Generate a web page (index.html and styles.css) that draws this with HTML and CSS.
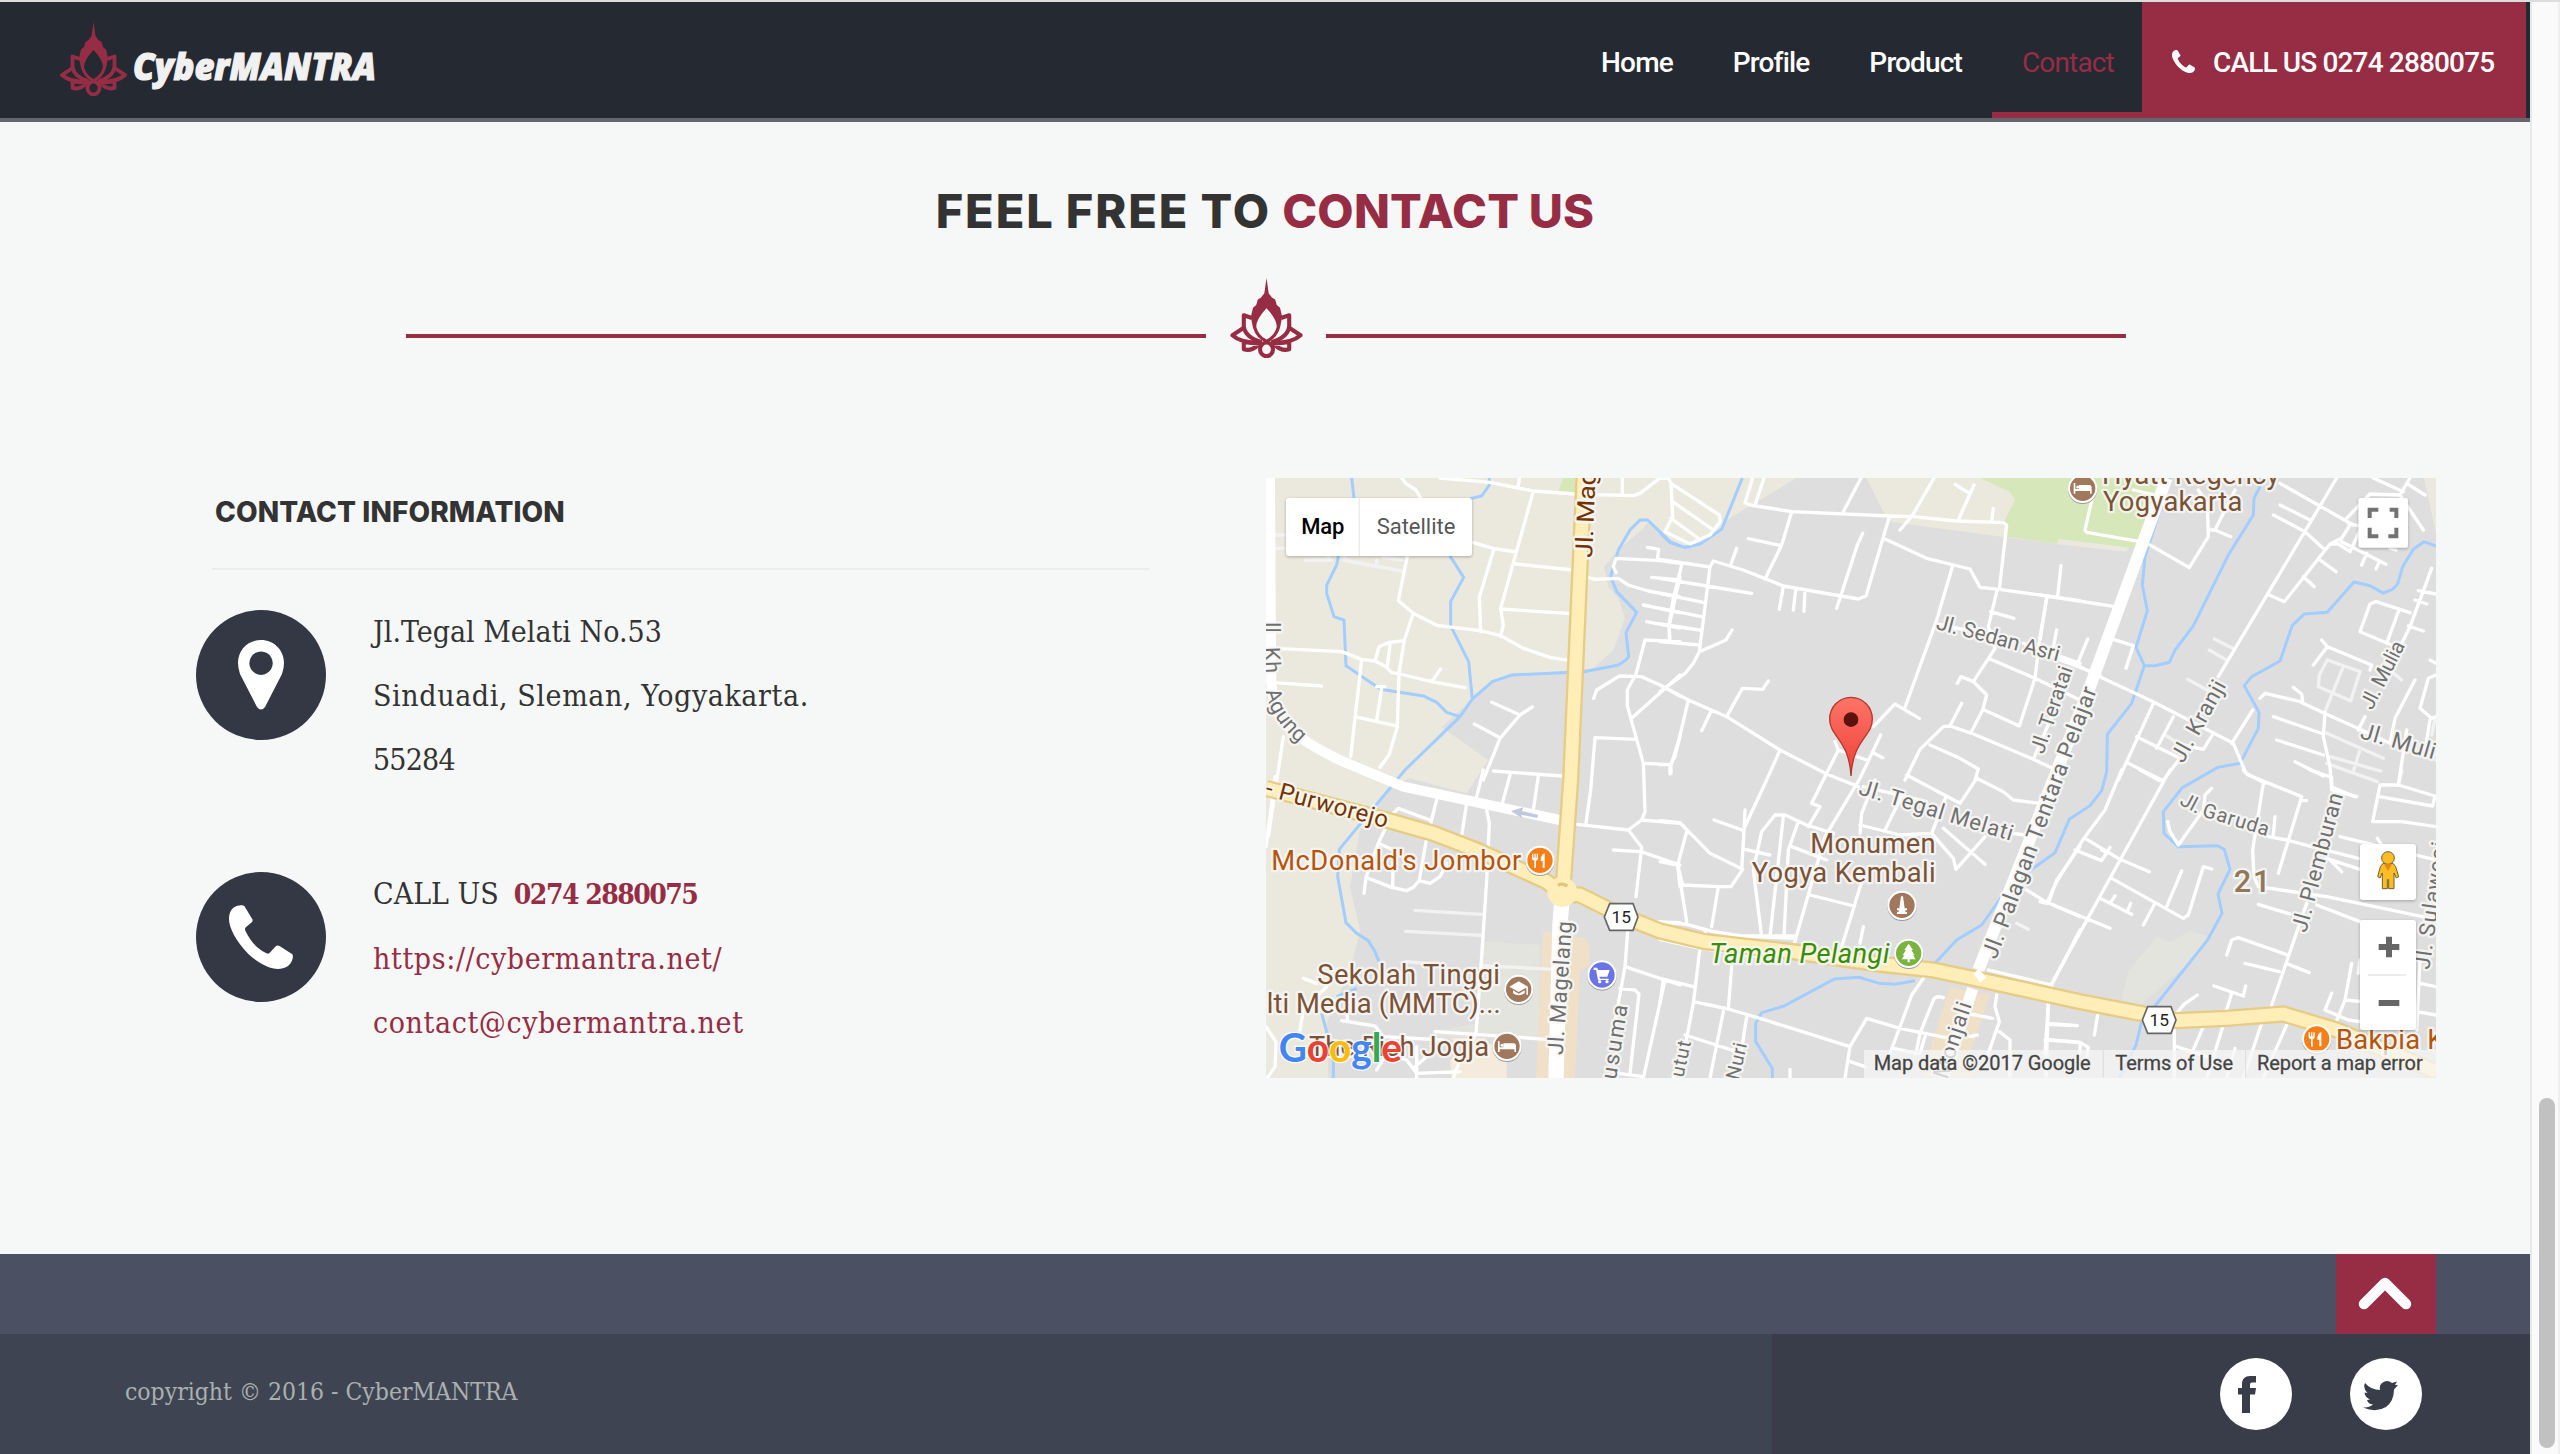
FILE: index.html
```html
<!DOCTYPE html>
<html lang="en">
<head>
<meta charset="utf-8">
<title>CyberMANTRA - Contact</title>
<link rel="stylesheet" href="styles.css">
</head>
<body>
<svg class="defs" width="0" height="0" aria-hidden="true">
  <symbol id="lotus" viewBox="0 0 67 74">
    <path fill="currentColor" fill-rule="evenodd" d="M33.500 0L35.500 14L38.500 18L41.500 20L43 25L46 27.500L48 36L46 46Q43 56 33.500 60Q24 56 21 46L19 36L21 27.500L24 25L25.500 20L28.500 18L31.500 14ZM33.500 28Q24 38 24 45Q26 53 33.500 57Q41 53 43 45Q43 38 33.500 28Z"/>
    <g fill="none" stroke="currentColor" stroke-width="3.800" stroke-linejoin="round">
      <path d="M20 37L12.500 34.500V45Q14 55 29 59.500M47 37L54.500 34.500V45Q53 55 38 59.500"/>
      <path d="M12.500 46L2 53Q10 60.500 29 60M54.500 46L65 53Q57 60.500 38 60"/>
      <path d="M12.500 60V66Q20 68 26 61.500M54.500 60V66Q47 68 41 61.500M14 59.500L29 61M53 59.500L38 61"/>
      <ellipse cx="33.500" cy="66" rx="6" ry="6.300"/>
    </g>
  </symbol>
  <symbol id="phone" viewBox="0 0 64 64">
    <path fill="currentColor" d="M8.500.800C11 0 14 0 15.500 1.200L23.500 14.500Q24 16 22.500 17.500L16.500 22.500Q15.500 24 16.500 26C22 37 28 43.500 37 48Q39.500 49.500 41 47.500L47 41Q48.500 40 50.500 41L63 49Q64.500 50 63.500 54C62 60.500 56 64 49 64C40 64 27 57 17 46.500C7 35.500 0 23 0 14C0 7 3 2.500 8.500.800Z"/>
  </symbol>
  <symbol id="bed" viewBox="-30 -30 60 60">
    <path fill="#fff" d="M-27 -16h5v18h11v-12h33q5 2 5 8v18h-5v-8h-44v8h-5z"/><circle cx="-15" cy="-4" r="4.500" fill="#fff"/>
  </symbol>
  <symbol id="food" viewBox="-30 -30 60 60">
    <path fill="#fff" d="M-22-20h4v12h3v-12h4v12h3v-12h4v15q-1 5-6 6v22h-5v-22q-6-1-7-6zM16-21v43h-6v-20h-6q-1-18 12-23z"/>
  </symbol>
</svg>

<div class="page">
  <header class="topbar">
    <a class="brand" href="#">
      <svg class="brand-mark"><use href="#lotus"/></svg>
      <svg class="brand-name" width="250" height="44"><text x="0" y="33" textLength="243" lengthAdjust="spacingAndGlyphs">CyberMANTRA</text></svg>
    </a>
    <nav class="nav">
      <a>Home</a><a>Profile</a><a>Product</a><a class="active">Contact</a>
      <a class="call"><svg><use href="#phone"/></svg><span>CALL US 0274 2880075</span></a>
    </nav>
  </header>

  <main>
    <h1>FEEL FREE TO <span>CONTACT US</span></h1>
    <div class="divider"><i></i><svg><use href="#lotus"/></svg><i></i></div>

    <div class="columns">
      <section class="info">
        <h2>CONTACT INFORMATION</h2>
        <div class="row">
          <div class="disc"><svg width="46" height="70" viewBox="0 0 46 70"><path fill="#fff" fill-rule="evenodd" d="M23 0C36 0 46 10 46 23Q46 28 44 34L27 67Q23 72 19 67L2 34Q0 28 0 23C0 10 10 0 23 0ZM23 11.500a11.700 11.700 0 1 0 .1 0Z"/></svg></div>
          <p><span>Jl.Tegal Melati No.53</span><br><span class="wide">Sinduadi, Sleman, Yogyakarta.</span><br><span class="digits">55284</span></p>
        </div>
        <div class="row second">
          <div class="disc"><svg class="phone" width="64" height="64"><use href="#phone"/></svg></div>
          <p><span>CALL US</span><b>0274 2880075</b><br><a class="wide">https://cybermantra.net/</a><br><a class="wide">contact@cybermantra.net</a></p>
        </div>
      </section>

      <svg class="map" viewBox="0 0 3510 1800" width="1170" height="600">
        <defs>
          <linearGradient id="pin" x1="0" y1="0" x2="0" y2="1"><stop offset="0" stop-color="#fd7567"/><stop offset="1" stop-color="#ef3f36"/></linearGradient>
        </defs>
        <!-- land -->
        <path class="land" d="M0 0H1592L1382 126L1367 154L1302 198L1257 208L1212 194L1147 131L1132 151L1057 216L1014 266L1027 326L1057 361L1077 421L1042 516L982 571L737 591L682 608L619 663L527 748L667 846L647 876L602 946L432 901L382 921L282 1056L252 1226L282 1356L252 1476L182 1636L187 1800H0Z"/>
        <path class="land" d="M1802 0L1857 111L1872 131L2372 198L2582 221L2590 205L2400 0ZM3474 0L3510 166V0Z"/>
        <path class="park" d="M2142 0L2232 41L2247 66L2214 131L2224 176L2372 198L2378 183L2622 212L2710 0ZM892 0L877 38L927 46V0Z"/>
        <path fill="#e4e4de" d="M2567 1566L2587 1481L2672 1376L2712 1393L2772 1359L2822 1373L2792 1436L2622 1581ZM652 1391L822 1401L817 1676H507V1661L632 1636Z"/>
        <path fill="#f5ebdc" d="M557 1800L552 1746L722 1680V1800ZM552 1680h110l-60 40z"/>
        <path fill="#f0e0c8" d="M832 1361L957 1381L970 1406V1466L942 1476L927 1800H810L827 1416ZM2052 1526L2172 1551L2112 1726L2122 1800H1972L1997 1696Z"/>
        <!-- water -->
        <g class="water">
          <path transform="translate(-18 -24)" d="M275 24L282 84M688 24V45L665 78L630 86M235 258L230 285L200 345V370L222 440L252 450L258 587L362 658L490 678L530 697L560 727L600 740M570 258L611 322L572 395V468L626 575L637 687M1260 228L1230 215L1163 150H1140L1110 180L1075 240L1052 320L1070 365L1130 427L1098 488L1106 560L1098 570L1075 585L972 605L755 615L697 635L637 687L600 740L435 900L238 1138L233 1220L258 1358L290 1390L325 1412L345 1445L357 1475M290 1555L230 1580M185 1630L220 1760V1824"/>
          <path transform="translate(1182 -24)" d="M0 187L30 218L75 232L120 222L185 178L247 24"/>
          <path transform="translate(2322 -24)" d="M390 24L330 215L315 260L307 345L322 422L288 532L313 587L275 700L202 793L200 905L185 962L150 1007L88 1048L45 1148L-90 1245L-175 1365L-250 1410L-315 1480M664 24L660 50L642 85L640 135L565 255L460 468L405 540L388 577L345 587H313M1188 228L1152 215L1120 238L1088 290L1073 342L1058 358L1030 369L990 347L942 336L862 427L793 432L757 466L720 573L635 620L613 647L657 727L655 775L600 880L533 892L427 953L370 1025L372 1090L415 1130L533 1127L553 1138L570 1198L534 1272L546 1330L503 1410L345 1608L305 1655L288 1725L238 1824"/>
          <path transform="translate(1182 876)" d="M765 632L705 643L658 640L597 622L523 627L372 708L305 728L287 760V815L337 895V924"/>
        </g>
        <!-- faint lanes -->
        <g class="lane faint">
          <path transform="translate(-18 -24)" d="M135 270H215M205 255V270M250 270L425 303M350 270V285M255 258V270M370 262L425 270M45 195H80M45 235H80"/>
          <path transform="translate(2322 -24)" d="M523 507L582 537M508 540L562 572M443 628L510 665M862 570L960 605L932 692L835 650L838 615ZM910 590L855 725M850 785L1030 865M870 860L1022 903M958 845L940 905M1050 600L1085 630M1185 745L1175 795M860 880L1012 935M375 795L430 830"/>
          <path transform="translate(-18 876)" d="M465 421L665 433M437 484L665 496M440 575L540 585M665 587L880 598"/>
          <path transform="translate(1182 876)" d="M1070 460L1105 478"/>
        </g>
        <!-- streets -->
        <g class="lane">
          <path transform="translate(-18 -24)" d="M425 24L437 40L468 60L482 84M540 24L690 37L820 63L945 72L1120 77L1140 70L1200 24M778 24L775 48M1087 24V72M820 63L722 415L730 465L722 500M640 218L702 236L770 246M702 236L658 382L662 485M768 282L940 300M722 417L932 431M442 258L415 392L460 430L530 466L660 482L722 497L790 535L870 562L930 572M460 430L433 510L417 610L412 770L387 855L360 892M45 535L245 545L305 568L345 573L378 590L395 608L420 612L515 635L615 653M345 573L357 530L385 518L433 512M390 522L382 588M515 635L542 597M305 568L272 860M45 638L185 648M285 740L405 767M350 650H375M365 655L350 750M70 800L40 1000L25 1100M695 697L780 735L720 805L670 930M780 735L817 711M643 762L720 803M975 320L1005 328L1075 325L1105 345L1165 363L1260 381M1068 308L1060 290L1068 265L1200 272L1260 280M1162 232L1196 238L1192 270M1175 322L1260 330M1150 405L1260 428M1160 455L1260 474M1260 320L1228 465V510M1260 515L1155 510L1128 612L1102 660V707L1130 808L1150 880L1155 1025L1145 1050L1105 1080L950 1063M1001 685L1010 660L1078 618L1145 620L1200 645L1260 678M1260 615L1115 745M1128 808L1005 803L992 960L978 1060M1150 880L1233 884L1260 800M1233 884V910M700 903L908 918"/>
          <path transform="translate(-18 876)" d="M750 15L727 100M835 18L820 120M670 0L650 80M680 120L688 160L680 330L665 560L648 790L600 870M620 100L603 210M530 90L498 215L478 330M395 135L415 115L510 150M395 135L355 220L318 322L312 370M355 220L400 240L398 350M318 322L395 352L440 362L462 350L478 332L510 340L540 320L560 280M1105 180L1145 232L1128 380M1060 240L1143 245L1260 285M1145 150L1260 160M1105 460L1095 590L1075 700L1060 780M1095 590L1260 645M1080 655L1125 660L1137 672L1110 910M1215 630L1150 924M1130 455L1260 458M900 330H870M960 360H970M45 20L18 230M200 650L130 720L120 780M260 690L262 750M245 752L345 768L370 800L550 810M600 870L580 924M350 900L380 850L440 870L470 910L600 905M470 830V924M18 770L48 815L45 890L22 924M525 785L860 808M1075 910L1150 920M1253 285L1260 350M130 625L170 640M500 860L465 890"/>
          <path transform="translate(1182 -24)" d="M0 24H25L33 40L38 140L15 185L90 222L150 195L180 155L178 135L33 40M38 95L160 180M33 145L118 207M278 24L255 98L270 105L395 125L690 138L760 140L890 153L1030 158L1040 165L1018 358L1260 392M312 24L287 100M603 24L550 125M822 24L757 137L720 180M942 45L895 150M885 43L925 68M1000 115L995 155M395 125L365 225L315 327M265 206L360 226M230 235L212 285M0 268L150 291L160 273L250 300L370 348L595 387L618 378L688 140M150 291L118 545L100 580L75 610L0 665M65 285L40 385L27 465L30 515M0 325L140 348L275 370M0 370L130 397M0 415L125 440M0 462L118 480M0 515L118 525M118 545L198 510L216 480M370 350L358 418M408 355L400 420M435 360L432 424M608 190L592 225L530 415M670 205L800 265L930 297L960 352L1018 358M878 287L830 450L735 712M1012 358L985 470L1005 535L940 635L980 675L968 720L932 790M992 425L1062 445M1160 385L1140 500L1125 625L1078 768L968 718M992 568L1125 625L1260 690M892 640L903 620L940 635M1203 287L1193 378M1190 480L1175 560M830 462L1015 500M1090 520L1260 580M0 645L85 690L200 740L360 840L500 912L595 950M85 690L45 860L30 885V912M0 884H30M155 720L125 782M200 740L247 655L308 658L325 633M360 840L320 930L250 1080M640 770L705 702L778 745M905 700L870 768M735 930L780 838L850 770L870 768L935 790L1120 868L1200 905M810 825L900 865L955 897L945 930M525 815L535 840L455 1000L480 1010L445 1070M662 795L600 925L540 1025L495 1100L400 1430M535 840L620 870M640 848L668 863M1175 740L1120 868"/>
          <path transform="translate(1182 876)" d="M0 152L60 158L150 250L248 298L213 350H175L68 345L53 285L0 275M80 185L53 285L80 455M175 350L155 470M60 158L90 190M162 150L252 182L245 300M252 182L255 120M255 238L330 255M305 500L280 300L305 185L345 135L375 135L440 165L520 190M370 140L330 500M415 155L385 240L372 500M245 498H405M450 375L582 408M605 335L545 530M610 470L600 520M0 455L80 463L160 485L245 498L405 505M0 508L120 535L300 560M120 535L100 700L75 830L40 924M0 625L100 650M10 630L0 700M215 590L205 715M100 695L205 717L300 745L570 830L620 745L720 775L870 805M190 725L150 924M260 740L240 870M75 795L230 845M390 898V924M570 830L555 924M570 875L615 890M790 625L755 675L735 730L690 850M780 790L820 690Q828 675 850 683M780 790L770 840M795 800L780 850M700 835L770 850M645 30L605 130L600 190M610 50L800 95M722 85L675 180M600 165L720 195L815 190L880 265L888 298L975 200M850 175L975 283M858 80L815 190M740 15L900 100L950 25L1030 65L1060 90L1140 100M1100 360L1165 400L1190 330L1260 230M1175 403L1260 440M985 600L1175 645L1260 480M1175 645V660M1165 700L1155 850M1165 760L1250 767M1155 810L1260 817M1010 675L1005 710L1018 755L985 850M1018 785L1050 810V924M930 800L952 795M930 732L998 745M1060 190L1095 195M395 230L500 270M135 480V495"/>
          <path transform="translate(2322 -24)" d="M330 225L448 293L505 200L502 100L475 60M505 180H525L572 200M525 180L585 60M280 60L345 75M160 70L135 180L140 187L300 215M720 40L940 165M890 24L535 620M720 105L810 150M700 135L795 185L855 240M1000 24L1090 65M1110 24L1080 75L1150 180M915 150L990 72L1080 75M930 165L905 205L870 222L733 395L683 373M870 222H895L930 245L965 170L925 160M905 215L1038 283M840 270L888 305M790 320L823 350M980 250L965 285M1018 275L1008 297M1050 235L1068 240M1100 40L1155 75M0 375L225 410M220 508L280 527L258 595M143 507L115 575M60 560L200 630L340 695L580 820L618 910L675 940M180 615L60 570M340 700L235 930M400 740L350 835M290 800L420 865L370 930M265 880L365 930M410 820L490 838L520 790M638 720L575 820M1175 295L1110 470L1080 530M1135 362L1188 372M1125 390L1160 402M1105 468L1150 483M1110 428L1008 395L990 402L960 485L1055 525M1075 425L1040 520M845 510L862 530L820 585M862 530L995 585L990 600M660 685L675 670L780 695L850 728L960 778L1050 820M760 652L785 672L788 695M855 728L850 800L870 890L875 960L950 980M700 740L850 792M710 810L850 855M765 875L850 918M1125 630L1065 745L1050 820M975 740L955 780M1170 570L1188 580M1188 615L1165 625L1140 715L1175 745L1188 740M1170 750L1155 840M1100 780L1075 945M20 385L0 510"/>
          <path transform="translate(2322 876)" d="M390 0L30 650M245 0L195 120L135 200L50 335L20 400L0 395M35 403L210 475M105 240L185 272L210 232M135 205L240 268L328 305M300 0L360 32M215 325L430 445L445 435L490 290L515 297M425 303L380 410M345 400L310 465M180 385L275 433M210 400L225 378M262 425L272 400M185 240L205 250M515 55L495 75L490 120L415 225L390 185L383 155M610 0L625 15L785 80L715 310M785 92H800M670 40L638 240L642 320L655 350L860 380L1188 448M705 140L700 195M685 200L740 210L850 240M655 403L750 432M740 210L955 265M870 270L905 305M900 200L1188 270M810 0L875 22V50L945 80M1085 0L1075 45L1185 78L1178 108L1018 80M1075 45H1020L998 155H1085L1188 170M1012 205L1025 225M860 265L980 305M830 405L960 455M560 555L575 510L595 503L738 553M800 400L690 720M615 580L718 605M738 580L808 608M410 730L432 703L472 675M522 648L610 678L617 648M575 670L558 725M935 580L915 690L885 765M855 720L925 750L960 755M875 670L855 720M915 690L965 695M960 570L955 610M1140 570L1130 780M1140 640L1188 650M1130 725L1188 735M25 700L18 924M22 763L112 767M20 808L120 817L145 832L140 860M120 820V850M173 735L163 795M403 770V924M410 830L500 860M490 770L455 850M550 765L500 924M665 760L610 924M740 765L670 924M585 835L560 924M1040 880L1188 900"/>
        </g>
        <!-- avenues -->
        <g class="avenue">
          <path stroke-width="30" d="M12 0L14 400L16 616Q20 690 60 740Q110 795 232 851L412 926L882 1026"/>
          <path stroke-width="36" d="M2702 0L2472 626L2137 1476"/>
          <path stroke-width="46" d="M889 1251L882 1340L870 1800"/>
        </g>
        <g class="highway-case"><path d="M954 0L943 246L914 906L894 1190L889 1251"/><path d="M0 931L362 1026L502 1066L632 1116L842 1211L889 1248L942 1251L1032 1296L1112 1331L1182 1359L1317 1391L1582 1421L1842 1459L2002 1476L2122 1501L2442 1571L2622 1606L2732 1628L2882 1621L3052 1608L3212 1656L3510 1781"/></g>
        <g class="highway"><path d="M954 0L943 246L914 906L894 1190L889 1251"/><path d="M0 931L362 1026L502 1066L632 1116L842 1211L889 1248L942 1251L1032 1296L1112 1331L1182 1359L1317 1391L1582 1421L1842 1459L2002 1476L2122 1501L2442 1571L2622 1606L2732 1628L2882 1621L3052 1608L3212 1656L3510 1781"/><circle cx="889" cy="1242" r="26"/></g>
        <path d="M876 1222q12-8 28 2" fill="none" stroke="#dfc57d" stroke-width="10"/>
        <path class="avenue" stroke-width="34" d="M2150 1486L2132 1500M2120 1532L2032 1800"/>
        <path d="M735 999L772 988L768 999L816 1010L814 1020L766 1010L768 1021Z" fill="#bfc8dd"/>
        <!-- street names -->
        <g class="label street">
          <text transform="translate(978 240) rotate(-87.500)" font-size="72" fill="#733300" textLength="262" lengthAdjust="spacingAndGlyphs">Jl. Mag</text>
          <text transform="translate(-4 433) rotate(90)" font-size="64">ll</text>
          <text transform="translate(-4 508) rotate(88)" font-size="64" textLength="78">Kh</text>
          <text transform="translate(-2 640) rotate(72)" font-size="64">A</text>
          <text transform="translate(8 680) rotate(62)" font-size="64">g</text>
          <text transform="translate(26 714) rotate(55)" font-size="64">u</text>
          <text transform="translate(48 744) rotate(48)" font-size="64">n</text>
          <text transform="translate(72 772) rotate(42)" font-size="64">g</text>
          <text transform="translate(-5 952) rotate(15)" font-size="72" fill="#733300" textLength="378">- Purworejo</text>
          <text transform="translate(2008 452) rotate(15)" font-size="64" textLength="380">Jl. Sedan Asri</text>
          <text transform="translate(2332 830) rotate(-71)" font-size="62" textLength="272">Jl. Teratai</text>
          <text transform="translate(2190 1446) rotate(-69.500)" font-size="68" textLength="865">Jl. Palagan Tentara Pelajar</text>
          <text transform="translate(2751 858) rotate(-61)" font-size="66" textLength="270">Jl. Kranji</text>
          <text transform="translate(3318 698) rotate(-63)" font-size="62" textLength="220">Jl. Mulia</text>
          <text transform="translate(3280 780) rotate(16)" font-size="68" textLength="270">Jl. Mulia</text>
          <text transform="translate(1775 948) rotate(17)" font-size="66" textLength="480">Jl. Tegal Melati</text>
          <text transform="translate(2738 978) rotate(28)" font-size="60">Jl.</text>
          <text transform="translate(2806 1014) rotate(17)" font-size="60" textLength="206">Garuda</text>
          <text transform="translate(3120 1366) rotate(-75)" font-size="66" textLength="430">Jl. Plemburan</text>
          <text transform="translate(3490 1476) rotate(-82)" font-size="66" textLength="385">Jl. Sulawesi</text>
          <text transform="translate(890 1732) rotate(-86)" font-size="66" textLength="402">Jl. Magelang</text>
          <text transform="translate(1050 1806) rotate(-81)" font-size="66" textLength="225">usuma</text>
          <text transform="translate(1252 1800) rotate(-78)" font-size="58" textLength="110">utut</text>
          <text transform="translate(1418 1808) rotate(-77)" font-size="58" textLength="112">Nuri</text>
          <text transform="translate(2044 1806) rotate(-72)" font-size="66" textLength="238">Monjali</text>
        </g>
        <!-- places -->
        <g class="label place">
          <text x="2508" y="17" textLength="532">Hyatt Regency</text>
          <text x="2511" y="100" textLength="418">Yogyakarta</text>
          <text x="16" y="1175" fill="#b5540c" textLength="750">McDonald's Jombor</text>
          <text x="154" y="1519" textLength="548">Sekolah Tinggi</text>
          <text x="2" y="1604" textLength="702">lti Media (MMTC)...</text>
          <text x="129" y="1733" textLength="540">The Rich Jogja</text>
          <text x="1633" y="1126" textLength="376">Monumen</text>
          <text x="1457" y="1211" textLength="552">Yogya Kembali</text>
          <text x="1330" y="1454" fill="#388e00" font-style="italic" textLength="540">Taman Pelangi</text>
          <text x="3210" y="1713" fill="#b5540c" textLength="252">Bakpia</text><text x="3484" y="1713" fill="#b5540c">K</text>
          <text x="2903" y="1242" font-size="92" fill="#92785a" font-weight="500" textLength="110">21</text>
        </g>
        <g class="marker">
          <circle cx="2450" cy="31" r="41" fill="#a1785c"/><circle cx="822" cy="1147" r="41" fill="#f67f17"/><circle cx="758" cy="1534" r="41" fill="#a1785c"/><circle cx="723" cy="1705" r="41" fill="#a1785c"/><circle cx="1008" cy="1491" r="41" fill="#6b74e6"/><circle cx="1908" cy="1282" r="41" fill="#a1785c"/><circle cx="1928" cy="1426" r="41" fill="#7ab342"/><circle cx="3152" cy="1683" r="41" fill="#f67f17"/>
        </g>
        <use href="#bed" x="2420" y="1" width="60" height="60"/><use href="#bed" x="693" y="1676" width="60" height="60"/>
        <use href="#food" x="790" y="1117" width="60" height="60"/><use href="#food" x="3120" y="1653" width="60" height="60"/>
        <g fill="#fff">
          <path d="M758 1510L786 1526L758 1542L730 1526ZM741 1537L758 1547L776 1537V1546Q758 1558 741 1546ZM781 1528H786V1550H781Z"/>
          <path d="M983 1469H993L997 1476H1031L1024 1496H1000L1003 1502H1028V1506H996L990 1476H983Z"/><circle cx="1001" cy="1511" r="5"/><circle cx="1023" cy="1511" r="5"/>
          <path d="M1905 1255H1911L1916 1291H1923V1297H1918V1302H1923V1308H1893V1302H1898V1297H1893V1291H1900Z"/>
          <path d="M1928 1397L1941 1416H1936L1946 1432H1941L1949 1444H1931V1453H1925V1444H1907L1915 1432H1910L1920 1416H1915Z"/>
        </g>
        <g class="shield">
          <path d="M1031 1277H1101L1116 1317L1101 1357H1031L1015 1317Z"/><text x="1066" y="1335">15</text>
          <path d="M2645 1586H2715L2730 1626L2715 1666H2645L2629 1626Z"/><text x="2680" y="1645">15</text>
        </g>
        <!-- pin -->
        <path d="M1755 658C1719 658 1691 687 1691 723C1691 777 1749 784 1755 894C1761 784 1819 777 1819 723C1819 687 1791 658 1755 658Z" fill="url(#pin)" stroke="#b5372f" stroke-width="4"/><circle cx="1755" cy="725" r="22" fill="#5c120f"/>
        <!-- logo and credits -->
        <text class="google" x="38" y="1752" textLength="370" lengthAdjust="spacingAndGlyphs"><tspan fill="#4285f4">G</tspan><tspan fill="#ea4335">o</tspan><tspan fill="#fbbc05">o</tspan><tspan fill="#4285f4">g</tspan><tspan fill="#34a853">l</tspan><tspan fill="#ea4335">e</tspan></text>
        <path d="M1794 1716H3510V1800H1794Z" fill="#f5f5f5" opacity=".75"/>
        <path d="M2512 1716v84M2939 1716v84" stroke="#ddd" stroke-width="3"/>
        <g class="credit"><text x="1823" y="1775" textLength="651">Map data ©2017 Google</text><text x="2548" y="1775" textLength="353">Terms of Use</text><text x="2973" y="1775" textLength="497">Report a map error</text></g>
        <!-- controls -->
        <g class="control">
          <rect x="60" y="60" width="558" height="174" rx="9"/>
          <rect x="3277" y="60" width="149" height="149" rx="6"/>
          <rect x="3282" y="1098" width="168" height="168" rx="8"/>
          <rect x="3282" y="1326" width="168" height="330" rx="8"/>
        </g>
        <path d="M280 60v174" stroke="#ebebeb" stroke-width="4"/>
        <text x="106" y="168" class="tab on" textLength="129">Map</text><text x="332" y="168" class="tab" textLength="236">Satellite</text>
        <path d="M3311 120V95H3337M3371 95H3391V120M3391 149V175H3367M3337 175H3311V149" fill="none" stroke="#737373" stroke-width="12"/>
        <path d="M3338 1407H3400M3369 1376V1438M3338 1575H3400" stroke="#666" stroke-width="18"/>
        <path d="M3306 1491H3420" stroke="#e6e6e6" stroke-width="5"/>
        <g stroke="#6d6034" stroke-width="3" fill="#fbbc25"><path d="M3351 1156H3381L3389 1166L3398 1196L3391 1200L3384 1185V1232H3368V1205H3364V1232H3349V1185L3342 1200L3335 1196L3343 1166Z"/><circle cx="3366" cy="1140" r="19"/></g><path d="M3354 1159H3378L3366 1179Z" fill="#e28b18"/>
      </svg>
    </div>
  </main>

  <footer>
    <div class="strip"><a class="up"><svg width="54" height="34" viewBox="0 0 54 34"><path d="M6 28L27 7L48 28" fill="none" stroke="#fff" stroke-width="10.500" stroke-linecap="round" stroke-linejoin="round"/></svg></a></div>
    <div class="base">
      <p>copyright © 2016 - CyberMANTRA</p>
      <div class="social">
        <a><svg width="18" height="37" viewBox="0 0 18 37"><path d="M4 37V18.500H0V12H4V8C4 3 7 0 12 0H18V6.500H14Q12 6.500 12 8.500V12H18L17 18.500H12V37Z" fill="#383d49"/></svg></a>
        <a class="bird"><svg width="35" height="30" viewBox="0 0 35 30"><path d="M2 2Q8 9 17 9Q16 4 19 2Q24-2 29 2L34 .5L32 4L35 4L31 8.500Q31 20 23 26Q13 32 0 26.500Q6 27 10 23.500Q5 23 4 19L7 18.500Q2 16.500 1.500 11.500L4.500 12Q-.5 7 2 2Z" fill="#383d49"/></svg></a>
      </div>
    </div>
  </footer>
</div>
<div class="scrollbar"><div class="thumb"></div></div>
</body>
</html>
```
FILE: styles.css
```css
* { box-sizing: border-box; }
html, body { height: 1454px; }
body { margin: 0; display: flex; overflow: hidden; background: #f6f8f7; border-top: 2px solid #dcdddd; color: #333; font-family: "DejaVu Serif Condensed", "DejaVu Serif", serif; font-stretch: condensed; }
p, h1, h2 { margin: 0; }
.defs { position: absolute; }
.page { width: 2530px; display: flex; flex-direction: column; }

.topbar { height: 120px; flex: none; display: flex; justify-content: space-between; background: #252932; border-bottom: 4px solid #63666f; padding: 0 4px 0 60px; }
.brand { display: flex; padding-top: 20px; gap: 6px; }
.brand-mark { width: 67px; height: 74px; color: #962d44; }
.brand-name { margin-top: 25px; overflow: visible; }
.brand-name text { font: italic 800 37px "Open Sans", sans-serif; fill: #f1f1f1; stroke: #f1f1f1; stroke-width: 1.2px; }
.nav { display: flex; font: 500 28px/122px Roboto, sans-serif; color: #fff; letter-spacing: -.85px; }
.nav a { height: 116px; padding: 0 30px; white-space: nowrap; }
.nav .active { color: #962d44; border-bottom: 6px solid #962d44; font-weight: 400; width: 150px; }
.nav .call { width: 384px; display: flex; background: #962d44; gap: 18px; }
.call svg { width: 23px; height: 23px; margin-top: 48px; }

main { flex: none; height: 1132px; }
h1 { margin-top: 60px; height: 58px; text-align: center; font: 800 47px/58px Inter, sans-serif; letter-spacing: 1.9px; word-spacing: -1px; white-space: nowrap; }
h1 span { color: #962d44; letter-spacing: .2px; }
.divider { margin: 36px 0 0 406px; height: 82px; width: 1720px; display: flex; justify-content: space-between; color: #962d44; }
.divider i { width: 800px; height: 4px; margin-top: 58px; background: currentColor; }
.divider svg { width: 73px; height: 80px; margin-top: 2px; }

.columns { display: flex; margin: 120px 0 0 196px; }
.info { width: 1070px; }
h2 { width: 938px; height: 92px; margin-left: 16px; padding-left: 3px; border-bottom: 2px solid #eceeed; font: 800 28px/69px Inter, sans-serif; letter-spacing: .1px; white-space: nowrap; }
.row { display: flex; gap: 47px; height: 262px; margin-top: 40px; }
.row.second { margin-top: 0; }
.disc { width: 130px; height: 130px; border-radius: 50%; background: #333844; color: #fff; display: flex; align-items: center; justify-content: center; }
.row p { font-size: 30px; line-height: 64px; margin-top: -10px; white-space: nowrap; }
.row p a, .row p b { color: #962d44; }
.row p b { margin-left: 15px; font-size: 28px; letter-spacing: -1.5px; }
.wide { letter-spacing: .6px; }
.digits { letter-spacing: -.8px; }

.map { display: block; width: 1170px; height: 600px; background: #dedede; overflow: hidden; font-family: Roboto, sans-serif; font-stretch: normal; }
.land { fill: #ebe9de; }
.park { fill: #d6e7b9; }
.water { fill: none; stroke: #a2cdff; stroke-width: 9; }
.lane { fill: none; stroke: #fff; stroke-width: 10; stroke-linecap: round; stroke-linejoin: round; }
.faint { stroke: #f2f2f2; }
.avenue { fill: none; stroke: #fff; }
.highway-case { fill: none; stroke: #e6cc85; stroke-width: 52; }
.highway { fill: #ffeeb8; stroke: #ffeeb8; stroke-width: 38; }
.highway path { fill: none; }
.label { paint-order: stroke; stroke: #f7f7f5; stroke-opacity: .85; stroke-width: 14; stroke-linejoin: round; }
.street { fill: #707070; }
.place { fill: #7b5235; font-size: 82px; }
.marker { stroke: #fff; stroke-width: 6; filter: drop-shadow(0 3px 2px #999); }
.shield path { fill: #fff; stroke: #666; stroke-width: 5; }
.shield text { font-size: 52px; text-anchor: middle; fill: #222; }
.google { font: 700 118px Lato, sans-serif; paint-order: stroke; stroke: #fff; stroke-width: 8; stroke-opacity: .8; }
.credit { font-size: 60px; fill: #444; stroke: #444; stroke-width: .8; }
.control { fill: #fff; filter: drop-shadow(0 3px 5px rgba(0,0,0,.28)); }
.tab { font-size: 66px; fill: #565656; }
.on { font-weight: 500; fill: #000; }

footer { flex: none; }
.strip { height: 80px; padding-right: 94px; display: flex; justify-content: flex-end; background: #4b5163; }
.up { width: 100px; display: flex; justify-content: center; padding: 22px 2px 0 0; background: #962d44; }
.base { height: 120px; display: flex; justify-content: space-between; background: #3f4452; }
.base p { padding-left: 125px; font-size: 24.500px; line-height: 116px; color: #a9b0b0; }
.social { width: 758px; display: flex; justify-content: flex-end; gap: 58px; padding: 24px 108px 0 0; background: #383d49; }
.social a { width: 72px; height: 72px; border-radius: 50%; background: #fff; padding: 18px 0 0 18px; }
.social .bird { padding: 23px 0 0 13px; }

.scrollbar { width: 30px; padding: 1096px 0 0 7px; background: #fafafa; border-left: 2px solid #e8e8e8; border-right: 2px solid #efefef; }
.thumb { width: 16px; height: 350px; border-radius: 8px; background: #c1c1c1; }
```
